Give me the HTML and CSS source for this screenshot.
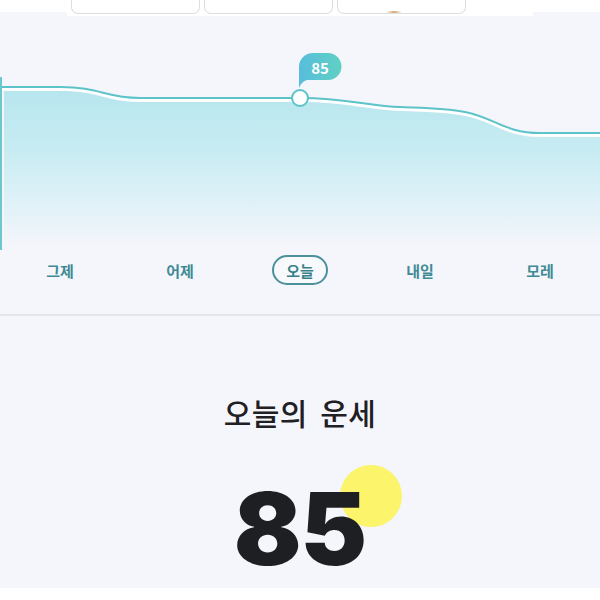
FILE: index.html
```html
<!DOCTYPE html>
<html>
<head>
  <title>오늘의 운세</title>
  <link rel="stylesheet" href="styles.css">
</head>
<body>
  <div class="top">
    <div class="top-inner">
      <div class="tab-card"></div>
      <div class="tab-card"></div>
      <div class="tab-card"><div class="tab-glint"></div></div>
    </div>
  </div>

  <div class="chart">
    <svg class="chart-svg" width="600" height="234" viewBox="0 16 600 234">
      <defs>
        <linearGradient id="fill-grad" x1="0" y1="0" x2="0" y2="1">
          <stop offset="0" stop-color="#b7e6ee"/>
          <stop offset="0.4" stop-color="#c9ecf3"/>
          <stop offset="0.75" stop-color="#e2f2f8"/>
          <stop offset="1" stop-color="#f5f6fb"/>
        </linearGradient>
        <linearGradient id="bubble-grad" x1="0" y1="0" x2="1" y2="0">
          <stop offset="0" stop-color="#57bddc"/>
          <stop offset="1" stop-color="#60d0c3"/>
        </linearGradient>
      </defs>
      <!-- area -->
      <path d="M4 91 H60 C100 91 105 102 140 102 H300 C345 102 370 110 400 111 C425 112 445 112 465 116 C495 122 505 137 540 137 H600 V248 H4 Z" fill="url(#fill-grad)"/>
      <!-- line -->
      <path d="M0 87 H60 C100 87 105 98 140 98 H300 C345 98 370 106 400 107 C425 108 445 108 465 112 C495 118 505 133 540 133 H600" fill="none" stroke="#ffffff" stroke-width="3" transform="translate(0 2)"/>
      <path d="M0 87 H60 C100 87 105 98 140 98 H300 C345 98 370 106 400 107 C425 108 445 108 465 112 C495 118 505 133 540 133 H600" fill="none" stroke="#5cc3c9" stroke-width="2"/>
      <line x1="1" y1="77" x2="1" y2="252" stroke="#6cc8cd" stroke-width="2"/>
      <!-- today marker -->
      <circle cx="300" cy="98" r="8" fill="#ffffff" stroke="#5cc3c9" stroke-width="2"/>
      <path d="M299 88 V67 A14 14 0 0 1 313 53 H328 A13.5 13.5 0 0 1 328 80 H307 Q302 81 299 88 Z" fill="url(#bubble-grad)"/>
      <text class="bubble-text" x="320" y="74" text-anchor="middle">85</text>
    </svg>
  </div>

  <div class="days">
    <span class="day">그제</span>
    <span class="day">어제</span>
    <span class="day"><span class="day-active">오늘</span></span>
    <span class="day">내일</span>
    <span class="day">모레</span>
  </div>

  <div class="divider"></div>

  <div class="fortune">
    <h2 class="fortune-title">오늘의 운세</h2>
    <div class="score-row">
      <span class="score">85</span>
    </div>
  </div>

  <div class="bottom"></div>
</body>
</html>
```

FILE: styles.css
```css
body {
  margin: 0;
  width: 600px;
  height: 600px;
  overflow: hidden;
  background-color: #f5f6fb;
  font-family: "Noto Sans CJK KR", "Noto Sans", sans-serif;
  color: #1f2024;
}

/* top tab strip (cut off) */
.top {
  height: 16px;
  background: linear-gradient(#ffffff 12px, transparent 12px);
}
.top-inner {
  margin: 0 67px;
  height: 16px;
  background-color: #ffffff;
  display: flex;
  gap: 4px;
  padding-left: 4px;
}
.tab-card {
  width: 127px;
  height: 13px;
  border: 1px solid #dedede;
  border-top: 0;
  border-radius: 0 0 7px 7px;
}
.tab-glint {
  width: 16px;
  height: 2px;
  margin: 11px 0 0 48px;
  background: linear-gradient(90deg, transparent, #d6a774, transparent);
}

/* chart */
.chart {
  height: 234px;
}
.chart-svg {
  display: block;
}
.bubble-text {
  font-family: "Noto Sans CJK KR", sans-serif;
  font-weight: 700;
  font-size: 15px;
  fill: #ffffff;
}

/* day labels */
.days {
  display: grid;
  grid-template-columns: repeat(5, 120px);
  margin-top: 5px;
  height: 30px;
}
.day {
  display: flex;
  align-items: center;
  justify-content: center;
  font-size: 15px;
  font-weight: 700;
  color: #3f8a94;
}
.day-active {
  display: flex;
  align-items: center;
  justify-content: center;
  box-sizing: border-box;
  width: 56px;
  height: 30px;
  border: 2px solid #4a9199;
  border-radius: 15px;
  background-color: #f8f9fc;
  color: #37808a;
}

.divider {
  margin-top: 29px;
  height: 2px;
  background-color: #e5e6eb;
}

/* fortune */
.fortune {
  text-align: center;
}
.fortune-title {
  margin: 76px 0 0;
  font-size: 30px;
  line-height: 40px;
  font-weight: 500;
  word-spacing: 5px;
  letter-spacing: 0.5px;
  color: #1f2024;
}
.score-row {
  margin-top: 47px;
  height: 100px;
}
.score {
  position: relative;
  display: inline-block;
  z-index: 0;
  font-family: Inter, sans-serif;
  font-size: 100px;
  line-height: 100px;
  font-weight: 900;
  letter-spacing: -1px;
  color: #1e1f23;
}
.score::before {
  content: "";
  position: absolute;
  z-index: -1;
  right: -36px;
  top: -14px;
  width: 62px;
  height: 62px;
  border-radius: 50%;
  background-color: #fcf46b;
}

.bottom {
  margin-top: 9px;
  height: 12px;
  background-color: #ffffff;
}
```
